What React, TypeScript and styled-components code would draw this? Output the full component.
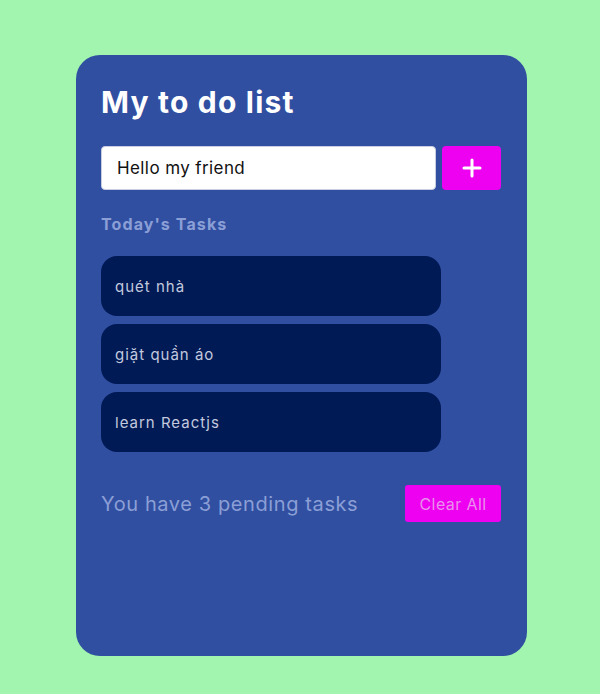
import styled, { createGlobalStyle } from "styled-components"
import { useState } from "react"

const GlobalStyle = createGlobalStyle`
  * { box-sizing: border-box; }
  body {
    margin: 0;
    background: #a1f5ae;
    font-family: "Inter", "Noto Sans", sans-serif;
  }
`

const tasks = ["quét nhà", "giặt quần áo", "learn Reactjs"]

const App = () => {
  const [text, setText] = useState<string>("Hello my friend")

  return (
    <Page>
      <GlobalStyle />
      <Card>
        <Title>My to do list</Title>
        <InputRow>
          <Input value={text} onChange={(e) => setText(e.target.value)} />
          <AddButton>
            <svg width="20" height="20" viewBox="0 0 20 20">
              <path d="M10 2v16M2 10h16" stroke="#fff" strokeWidth="3" strokeLinecap="round" />
            </svg>
          </AddButton>
        </InputRow>
        <SectionLabel>Today's Tasks</SectionLabel>
        <TaskList>
          {tasks.map((t) => (
            <TaskItem key={t}>{t}</TaskItem>
          ))}
        </TaskList>
        <Footer>
          <Pending>You have {tasks.length} pending tasks</Pending>
          <ClearButton>Clear All</ClearButton>
        </Footer>
      </Card>
    </Page>
  )
}
export default App

const Page = styled.div`
  width: 600px;
  height: 694px;
  padding: 55px 0 0 76px;
  display: flex;
`

const Card = styled.div`
  width: 451px;
  height: 601px;
  background: #314fa1;
  border-radius: 24px;
  padding: 26px 26px 0 25px;
  display: flex;
  flex-direction: column;
`

const Title = styled.h1`
  margin: 0;
  font-size: 30px;
  font-weight: 700;
  color: #fff;
  line-height: 42px;
  letter-spacing: 1.2px;
`

const InputRow = styled.div`
  display: flex;
  gap: 6px;
  margin-top: 23px;
`

const Input = styled.input`
  width: 335px;
  height: 44px;
  border: 1px solid #c9cde0;
  border-radius: 4px;
  padding: 0 15px;
  font-family: inherit;
  font-size: 17px;
  letter-spacing: 0.4px;
  color: #111;
  outline: none;
`

const AddButton = styled.button`
  width: 59px;
  height: 44px;
  border: none;
  border-radius: 4px;
  background: #ee00f0;
  display: flex;
  align-items: center;
  justify-content: center;
  padding: 0;
`

const SectionLabel = styled.div`
  margin-top: 24px;
  font-size: 16px;
  font-weight: 700;
  color: #8b9fd6;
  letter-spacing: 1.1px;
  line-height: 20px;
`

const TaskList = styled.div`
  display: flex;
  flex-direction: column;
  gap: 8px;
  margin-top: 22px;
`

const TaskItem = styled.div`
  width: 340px;
  height: 60px;
  background: #001a56;
  border-radius: 16px;
  padding: 0 14px;
  display: flex;
  align-items: center;
  font-size: 15px;
  font-weight: 400;
  letter-spacing: 1px;
  color: #c3c9de;
`

const Footer = styled.div`
  display: flex;
  align-items: center;
  justify-content: space-between;
  margin-top: 33px;
`

const Pending = styled.span`
  font-size: 20px;
  letter-spacing: 0.6px;
  color: #8b9fd6;
`

const ClearButton = styled.button`
  width: 96px;
  height: 37px;
  border: none;
  border-radius: 3px;
  background: #ee00f0;
  color: #eb8fee;
  font-family: inherit;
  font-size: 16px;
  letter-spacing: 0.4px;
  padding: 0;
`
